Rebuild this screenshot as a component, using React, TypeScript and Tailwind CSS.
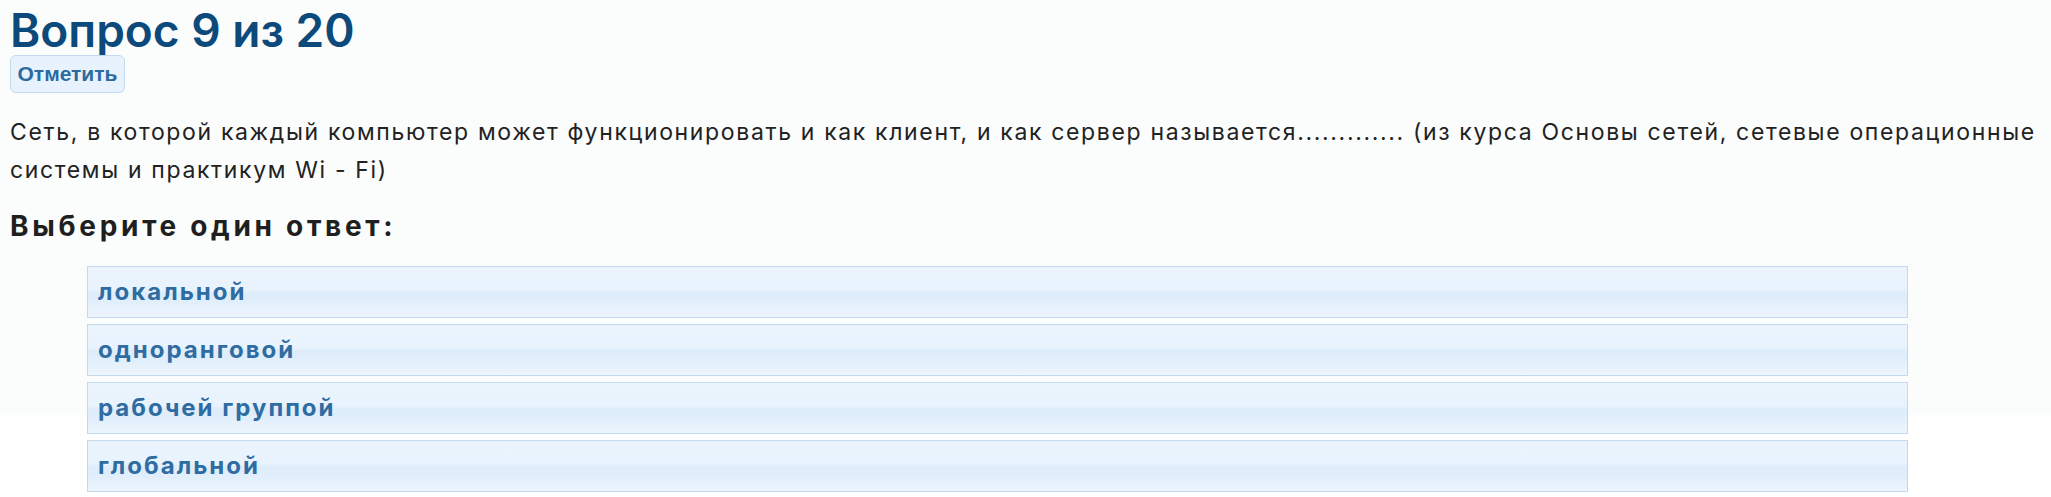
const answers = ['локальной', 'одноранговой', 'рабочей группой', 'глобальной'];

function AnswerRow({ label }: { label: string }) {
  return (
    <div className="flex h-[52px] items-center border border-[#c3d9ee] bg-[linear-gradient(to_bottom,#ebf4fd_0%,#e9f3fd_45%,#deedfb_52%,#e1eefb_70%,#edf5fd_100%)] px-[10px]">
      <span className="text-[24px] font-bold tracking-[2px] text-[#2e6ca2]">{label}</span>
    </div>
  );
}

export default function App() {
  return (
    <div className="min-h-[497px] bg-[linear-gradient(to_bottom,#fbfcfc_415px,#ffffff_415px)] px-[10px] pt-[4px] font-['Inter','Open_Sans',sans-serif]">
      <h1 className="text-[46px] leading-[52px] font-semibold text-[#0c4a7c]">Вопрос 9 из 20</h1>

      <button className="mt-[-1px] h-[38px] w-[115px] rounded-[6px] border border-[#c3d9ee] bg-[#e7f2fc] font-['Liberation_Sans',Arial,sans-serif] text-[21px] font-bold text-[#2c6a9f]">
        Отметить
      </button>

      <p className="mt-[20px] text-[23px] leading-[38px] tracking-[1.65px] text-[#222222]">
        Сеть, в которой каждый компьютер может функционировать и как клиент, и как сервер называется............. (из курса Основы сетей, сетевые операционные системы и практикум Wi - Fi)
      </p>

      <h2 className="mt-[20px] text-[28px] leading-[34px] font-bold tracking-[3.7px] text-[#1f1f1f]">Выберите один ответ:</h2>

      <div className="mt-[23px] ml-[77px] mr-[133px] flex flex-col gap-[6px]">
        {answers.map((a) => (
          <AnswerRow key={a} label={a} />
        ))}
      </div>
    </div>
  );
}
